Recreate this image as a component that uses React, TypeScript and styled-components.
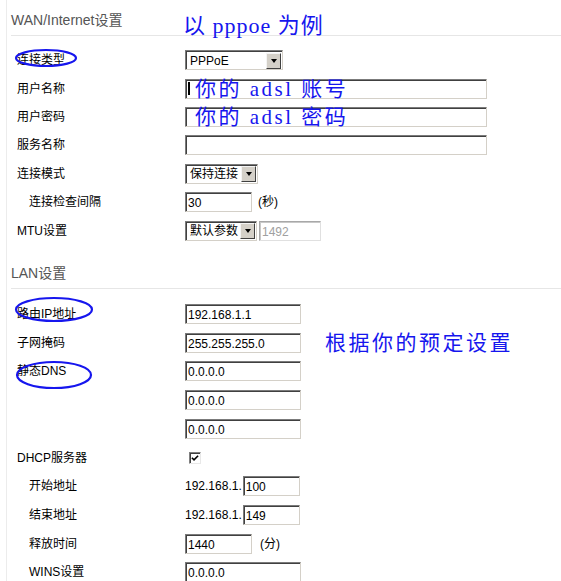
import React from "react";
import styled, { createGlobalStyle } from "styled-components";

const GlobalStyle = createGlobalStyle`
  body {
    margin: 0;
    background: #fff;
    color: #000;
    font-family: "Liberation Sans", Arial, "Noto Sans CJK SC", sans-serif;
    font-size: 12px;
  }
`;

const BLUE = "#1616ee";

const Page = styled.div`
  margin-left: 6px;
  border-left: 1px solid #ececec;
  min-height: 600px;
  overflow: hidden;
`;

const SectionHead = styled.div<{ $gap: number }>`
  display: flex;
  align-items: flex-end;
  height: 35px;
  margin: ${(p) => p.$gap}px 0 0 4px;
  border-bottom: 1px solid #e6e6e6;
`;

const HeadTitle = styled.div`
  width: 172px;
  padding-bottom: 8px;
  font-size: 14px;
  line-height: 14px;
  color: #555;
`;

/* blue hand-written notes on the screenshot */
const Note = styled.span<{ $size?: number; $spacing?: number }>`
  font-family: "Liberation Serif", "Noto Sans CJK SC", serif;
  font-size: ${(p) => p.$size ?? 20}px;
  letter-spacing: ${(p) => p.$spacing ?? 2}px;
  line-height: 24px;
  color: ${BLUE};
  white-space: nowrap;
`;

const HeadNote = styled(Note)`
  margin-bottom: -3px;
`;

const Rows = styled.div<{ $gap: number; $h: number }>`
  margin-top: ${(p) => p.$gap}px;
  display: grid;
  grid-auto-rows: ${(p) => p.$h}px;
`;

const Row = styled.div`
  display: grid;
  grid-template-columns: 168px 1fr;
  align-items: center;
  padding-left: 10px;
`;

const Label = styled.div<{ $indent?: boolean }>`
  position: relative;
  padding-left: ${(p) => (p.$indent ? 12 : 0)}px;
  line-height: 14px;
  white-space: nowrap;
`;

const Field = styled.div<{ $gap?: number; $bottom?: boolean }>`
  display: flex;
  align-items: ${(p) => (p.$bottom ? "flex-end" : "center")};
  gap: ${(p) => p.$gap ?? 0}px;
`;

const Holder = styled.div`
  position: relative;
  display: flex;
`;

const TextBox = styled.input<{ $w: number }>`
  box-sizing: border-box;
  width: ${(p) => p.$w}px;
  height: 20px;
  margin: 0;
  padding: 2px 0 0 2px;
  border: 1px solid;
  border-color: #7b7b7b #d4d0c8 #d4d0c8 #7b7b7b;
  box-shadow: inset 1px 1px 0 #404040;
  background: #fff;
  font: 12px "Liberation Sans", Arial, sans-serif;
  color: #000;
  outline: none;

  &:disabled {
    border-color: #a8a8a8 #e0e0e0 #e0e0e0 #a8a8a8;
    box-shadow: inset 1px 1px 0 #c8c8c8;
    color: #a0a0a0;
    background: #fff;
  }
`;

const SelectBox = styled.div<{ $w: number }>`
  box-sizing: border-box;
  width: ${(p) => p.$w}px;
  height: 20px;
  display: flex;
  align-items: center;
  justify-content: space-between;
  padding: 1px 1px 0 4px;
  border: 1px solid;
  border-color: #7b7b7b #d4d0c8 #d4d0c8 #7b7b7b;
  box-shadow: inset 1px 1px 0 #404040;
  background: #fff;
  line-height: 14px;
  white-space: nowrap;
`;

const DropButton = styled.span`
  box-sizing: border-box;
  width: 15px;
  height: 16px;
  display: flex;
  align-items: center;
  justify-content: center;
  background: #d4d0c8;
  border: 1px solid;
  border-color: #f4f4f4 #404040 #404040 #f4f4f4;

  &::after {
    content: "";
    border-left: 3.5px solid transparent;
    border-right: 3.5px solid transparent;
    border-top: 4px solid #000;
  }
`;

const Unit = styled.span`
  line-height: 14px;
`;

const Prefix = styled.span`
  line-height: 14px;
  padding-bottom: 3px;
  margin-right: 1px;
`;

const CheckBox = styled.span`
  box-sizing: border-box;
  width: 12px;
  height: 12px;
  margin: 0 0 0 4px;
  display: flex;
  align-items: center;
  justify-content: center;
  border: 1px solid;
  border-color: #808080 #e8e8e8 #e8e8e8 #808080;
  box-shadow: inset 1px 1px 0 #404040;
  background: #fff;
`;

const Caret = styled.span`
  position: absolute;
  left: 3px;
  top: 3px;
  width: 2px;
  height: 13px;
  background: #000;
`;

const BoxNote = styled(Note)`
  position: absolute;
  left: 10px;
  top: -2px;
  pointer-events: none;
`;

const MarkSvg = styled.svg<{ $l: number; $t: number }>`
  position: absolute;
  left: ${(p) => p.$l}px;
  top: ${(p) => p.$t}px;
  overflow: visible;
  pointer-events: none;
`;

const Mark = ({ l, t, w, h }: { l: number; t: number; w: number; h: number }) => (
  <MarkSvg $l={l} $t={t} width={w} height={h}>
    <ellipse cx={w / 2} cy={h / 2} rx={w / 2 - 1} ry={h / 2 - 1} fill="none" stroke={BLUE} strokeWidth="2.2" />
  </MarkSvg>
);

const Select = ({ w, value }: { w: number; value: string }) => (
  <SelectBox $w={w}>
    <span>{value}</span>
    <DropButton />
  </SelectBox>
);

const Input = ({ w, value = "", disabled }: { w: number; value?: string; disabled?: boolean }) => (
  <TextBox $w={w} defaultValue={value} disabled={disabled} readOnly />
);

export default function App() {
  return (
    <>
      <GlobalStyle />
      <Page>
        <SectionHead $gap={0}>
          <HeadTitle>WAN/Internet设置</HeadTitle>
          <HeadNote $size={22} $spacing={1}>以 pppoe 为例</HeadNote>
        </SectionHead>
        <Rows $gap={10} $h={28.4}>
          <Row>
            <Label>
              <Mark l={-2} t={-4} w={62} h={18} />
              连接类型
            </Label>
            <Field>
              <Select w={98} value="PPPoE" />
            </Field>
          </Row>
          <Row>
            <Label>用户名称</Label>
            <Field>
              <Holder>
                <Input w={302} />
                <Caret />
                <BoxNote $size={21} $spacing={2.5}>你的 adsl 账号</BoxNote>
              </Holder>
            </Field>
          </Row>
          <Row>
            <Label>用户密码</Label>
            <Field>
              <Holder>
                <Input w={302} />
                <BoxNote $size={21} $spacing={2.5}>你的 adsl 密码</BoxNote>
              </Holder>
            </Field>
          </Row>
          <Row>
            <Label>服务名称</Label>
            <Field>
              <Input w={302} />
            </Field>
          </Row>
          <Row>
            <Label>连接模式</Label>
            <Field>
              <Select w={73} value="保持连接" />
            </Field>
          </Row>
          <Row>
            <Label $indent>连接检查间隔</Label>
            <Field $gap={6}>
              <Input w={67} value="30" />
              <Unit>(秒)</Unit>
            </Field>
          </Row>
          <Row>
            <Label>MTU设置</Label>
            <Field $gap={2}>
              <Select w={72} value="默认参数" />
              <Input w={62} value="1492" disabled />
            </Field>
          </Row>
        </Rows>

        <SectionHead $gap={8}>
          <HeadTitle>LAN设置</HeadTitle>
        </SectionHead>
        <Rows $gap={11} $h={28.7}>
          <Row>
            <Label>
              <Mark l={-2} t={-10} w={78} h={25} />
              路由IP地址
            </Label>
            <Field>
              <Input w={116} value="192.168.1.1" />
            </Field>
          </Row>
          <Row>
            <Label>子网掩码</Label>
            <Field $gap={24}>
              <Input w={116} value="255.255.255.0" />
              <Note $size={21} $spacing={2.5}>根据你的预定设置</Note>
            </Field>
          </Row>
          <Row>
            <Label>
              <Mark l={-1} t={-3} w={76} h={28} />
              静态DNS
            </Label>
            <Field>
              <Input w={116} value="0.0.0.0" />
            </Field>
          </Row>
          <Row>
            <Label />
            <Field>
              <Input w={116} value="0.0.0.0" />
            </Field>
          </Row>
          <Row>
            <Label />
            <Field>
              <Input w={116} value="0.0.0.0" />
            </Field>
          </Row>
          <Row>
            <Label>DHCP服务器</Label>
            <Field>
              <CheckBox>
                <svg width="8" height="8" viewBox="0 0 9 9">
                  <path d="M1 4.2 L3.4 6.6 L8 2" fill="none" stroke="#000" strokeWidth="1.8" />
                </svg>
              </CheckBox>
            </Field>
          </Row>
          <Row>
            <Label $indent>开始地址</Label>
            <Field $bottom>
              <Prefix>192.168.1.</Prefix>
              <Input w={57} value="100" />
            </Field>
          </Row>
          <Row>
            <Label $indent>结束地址</Label>
            <Field $bottom>
              <Prefix>192.168.1.</Prefix>
              <Input w={57} value="149" />
            </Field>
          </Row>
          <Row>
            <Label $indent>释放时间</Label>
            <Field $gap={8}>
              <Input w={67} value="1440" />
              <Unit>(分)</Unit>
            </Field>
          </Row>
          <Row>
            <Label $indent>WINS设置</Label>
            <Field>
              <Input w={116} value="0.0.0.0" />
            </Field>
          </Row>
        </Rows>
      </Page>
    </>
  );
}
